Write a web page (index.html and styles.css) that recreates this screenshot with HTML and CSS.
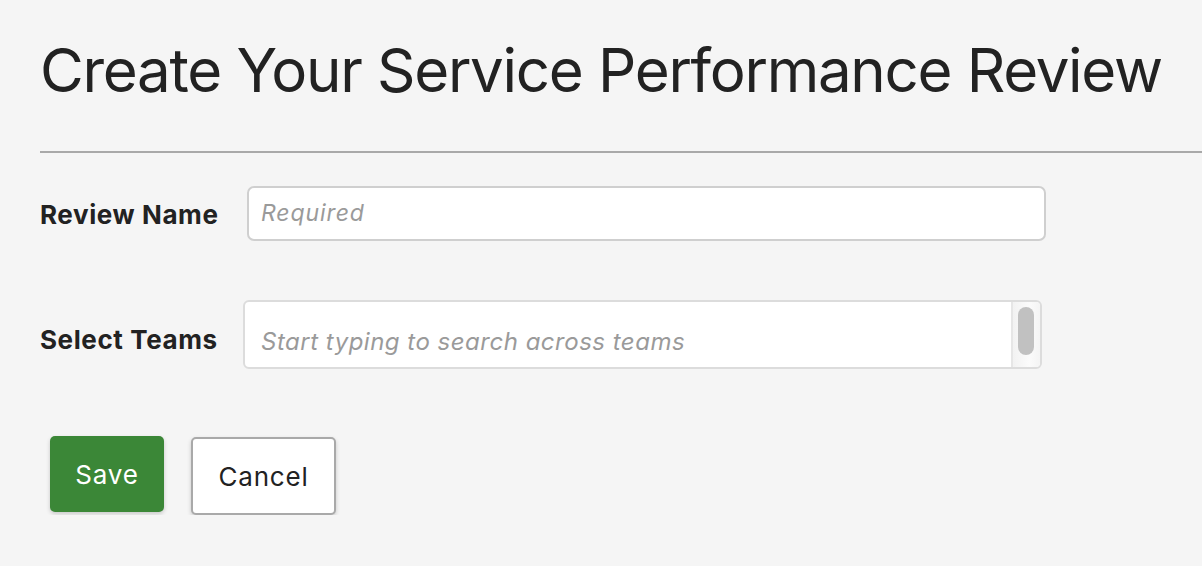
FILE: index.html
```html
<!DOCTYPE html>
<html>
<head>
<meta charset="utf-8">
<link rel="stylesheet" href="styles.css">
</head>
<body>
<div class="page">
  <h1 class="title">Create Your Service Performance Review</h1>
  <hr class="divider">
  <form class="form">
    <div class="row row-name">
      <label class="label">Review Name</label>
      <input class="text-input" type="text" placeholder="Required">
    </div>
    <div class="row row-teams">
      <label class="label">Select Teams</label>
      <div class="multi">
        <input class="multi-input" type="text" placeholder="Start typing to search across teams">
        <div class="scrollbar"><div class="thumb"></div></div>
      </div>
    </div>
    <div class="actions">
      <button type="button" class="btn btn-save">Save</button>
      <button type="button" class="btn btn-cancel">Cancel</button>
    </div>
  </form>
</div>
</body>
</html>
```
FILE: styles.css
```css
html, body {
  margin: 0;
  padding: 0;
  background: #f5f5f5;
  overflow: hidden;
}
body {
  font-family: "Inter", "Liberation Sans", sans-serif;
  color: #222;
}
.page {
  padding: 30px 0 0 40px;
}
.title {
  margin: 0;
  font-size: 60px;
  font-weight: 400;
  line-height: 80px;
  letter-spacing: -1.3px;
  color: #222;
  white-space: nowrap;
}
.divider {
  margin: 41px 0 0 0;
  border: 0;
  height: 2px;
  background: #a9a9a9;
}
.form {
  display: flex;
  flex-direction: column;
}
.label {
  font-size: 26px;
  font-weight: 700;
  color: #222;
  letter-spacing: 0.6px;
}
.row {
  display: flex;
  align-items: center;
}
.row-name {
  margin-top: 33px;
  height: 54px;
}
.row-name .label {
  width: 207px;
  padding-top: 3px;
}
.text-input {
  box-sizing: border-box;
  width: 799px;
  height: 55px;
  border: 2px solid #cfcfcf;
  border-radius: 7px;
  background: #fff;
  padding: 0 12px;
  font-family: "Inter", sans-serif;
  font-size: 23px;
  letter-spacing: 0.9px;
  outline: none;
}
.text-input::placeholder, .multi-input::placeholder {
  color: #9a9a9a;
  font-style: italic;
}
.row-teams {
  margin-top: 60px;
}
.row-teams .label {
  width: 203px;
  padding-top: 9px;
}
.multi {
  box-sizing: border-box;
  width: 799px;
  height: 69px;
  border: 2px solid #dcdcdc;
  border-radius: 6px;
  background: #fff;
  display: flex;
  overflow: hidden;
}
.multi-input {
  flex: 1;
  border: 0;
  outline: none;
  background: transparent;
  padding: 14px 16px 0 16px;
  font-family: "Inter", sans-serif;
  font-size: 24px;
  letter-spacing: 0.5px;
}
.scrollbar {
  width: 29px;
  border-left: 2px solid #e6e6e6;
  background: linear-gradient(to right, #f2f2f2, #fbfbfb 60%, #f4f4f4);
  padding: 5px 0 0 5px;
  box-sizing: border-box;
}
.thumb {
  width: 16px;
  height: 48px;
  border-radius: 8px;
  background: #c1c1c1;
}
.actions {
  display: flex;
  align-items: flex-start;
  gap: 27px;
  margin-top: 67px;
  padding-left: 10px;
}
.btn {
  font-family: "Inter", sans-serif;
  font-size: 26px;
  border-radius: 5px;
  cursor: pointer;
  letter-spacing: 0.8px;
  box-shadow: 0 2px 4px rgba(0,0,0,0.18);
}
.btn-save {
  width: 114px;
  height: 76px;
  background: #3b8737;
  color: #fff;
  border: 0;
}
.btn-cancel {
  width: 145px;
  height: 78px;
  margin-top: 1px;
  background: #fff;
  color: #222;
  border: 2px solid #a9a9a9;
}
```
